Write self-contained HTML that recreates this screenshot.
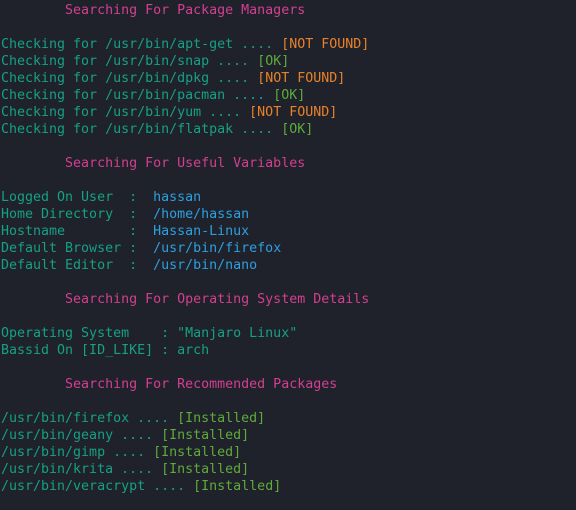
<!DOCTYPE html>
<html><head><meta charset="utf-8"><style>
html,body{margin:0;padding:0;background:#1f222a;width:576px;height:510px;overflow:hidden}
pre{margin:0;padding:2px 0 0 1px;font-family:"DejaVu Sans Mono","Liberation Mono",monospace;font-size:13.3px;line-height:17px;color:#16a085}
.h{color:#d33f91}.o{color:#e8822a}.g{color:#5faa3c}.b{color:#2e9fe0}
</style></head><body><pre>        <span class="h">Searching For Package Managers</span>

Checking for /usr/bin/apt-get .... <span class="o">[NOT FOUND]</span>
Checking for /usr/bin/snap .... <span class="g">[OK]</span>
Checking for /usr/bin/dpkg .... <span class="o">[NOT FOUND]</span>
Checking for /usr/bin/pacman .... <span class="g">[OK]</span>
Checking for /usr/bin/yum .... <span class="o">[NOT FOUND]</span>
Checking for /usr/bin/flatpak .... <span class="g">[OK]</span>

        <span class="h">Searching For Useful Variables</span>

Logged On User  :  <span class="b">hassan</span>
Home Directory  :  <span class="b">/home/hassan</span>
Hostname        :  <span class="b">Hassan-Linux</span>
Default Browser :  <span class="b">/usr/bin/firefox</span>
Default Editor  :  <span class="b">/usr/bin/nano</span>

        <span class="h">Searching For Operating System Details</span>

Operating System    : "Manjaro Linux"
Bassid On [ID_LIKE] : arch

        <span class="h">Searching For Recommended Packages</span>

/usr/bin/firefox .... <span class="g">[Installed]</span>
/usr/bin/geany .... <span class="g">[Installed]</span>
/usr/bin/gimp .... <span class="g">[Installed]</span>
/usr/bin/krita .... <span class="g">[Installed]</span>
/usr/bin/veracrypt .... <span class="g">[Installed]</span>
</pre></body></html>
